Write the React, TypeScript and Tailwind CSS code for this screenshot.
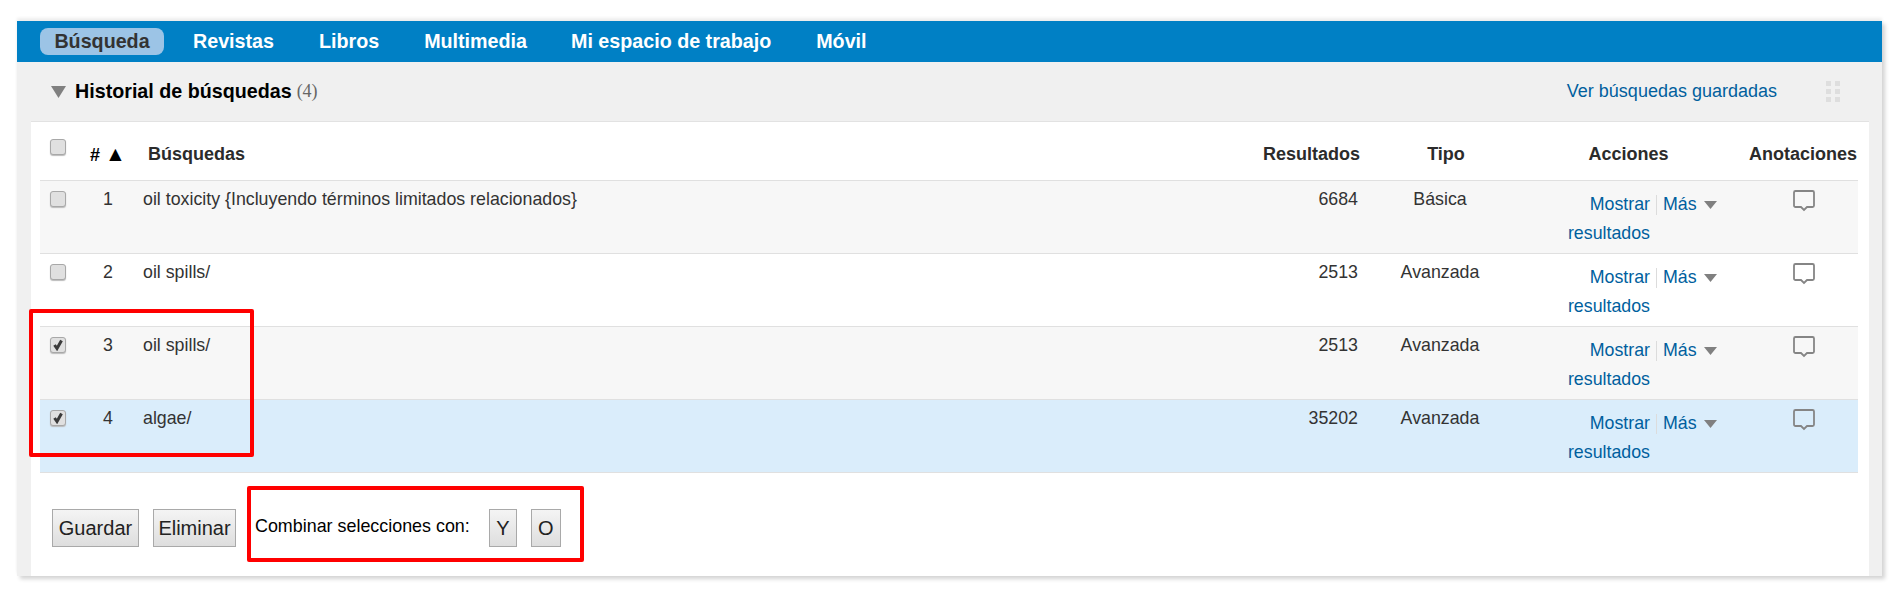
const font = '[font-family:"Liberation_Sans",Arial,sans-serif]';

const rows = [
  { n: 1, q: "oil toxicity {Incluyendo términos limitados relacionados}", r: "6684", t: "Básica", checked: false, bg: "bg-[#f7f7f7]" },
  { n: 2, q: "oil spills/", r: "2513", t: "Avanzada", checked: false, bg: "bg-white" },
  { n: 3, q: "oil spills/", r: "2513", t: "Avanzada", checked: true, bg: "bg-[#f7f7f7]" },
  { n: 4, q: "algae/", r: "35202", t: "Avanzada", checked: true, bg: "bg-[#daedfb]" },
];

const grid = "grid grid-cols-[48px_40px_1fr_140px_130px_245px_108px]";

function Check({ checked }: { checked?: boolean }) {
  return (
    <span className="flex h-[16px] w-[16px] items-center justify-center rounded-[3px] border border-[#a8a8a8] bg-[#e0e0e0] shadow-[0_1px_1px_#bbb]">
      {checked && (
        <svg width="12" height="12" viewBox="0 0 12 12">
          <path d="M2.500 6 L5 9.500 L9.500 1.500" fill="none" stroke="#3a3a3a" strokeWidth="3" />
        </svg>
      )}
    </span>
  );
}

function Comment() {
  return (
    <svg width="24" height="24" viewBox="0 0 24 24" fill="none">
      <path
        d="M3.500 2h17a1.500 1.500 0 0 1 1.500 1.500v13a1.500 1.500 0 0 1-1.500 1.500H15l-3 3-3-3H3.500A1.500 1.500 0 0 1 2 16.500v-13A1.500 1.500 0 0 1 3.500 2z"
        stroke="#858585"
        strokeWidth="1.800"
      />
    </svg>
  );
}

function Tri({ size }: { size: "sm" | "lg" }) {
  return size === "sm" ? (
    <svg width="13" height="8" viewBox="0 0 13 8"><path d="M0 0h13L6.500 8z" fill="#808080" /></svg>
  ) : (
    <svg width="15" height="12" viewBox="0 0 15 12"><path d="M0 0h15L7.500 12z" fill="#808080" /></svg>
  );
}

function Btn({ children, className }: { children: string; className: string }) {
  return (
    <button className={`h-[38px] border border-[#a9a9a9] bg-gradient-to-b from-[#f4f4f4] to-[#dedede] text-[20px] text-[#222] ${className}`}>
      {children}
    </button>
  );
}

export default function App() {
  return (
    <div className={`${font} h-[595px] w-[1899px] overflow-hidden bg-white pl-[17px] pt-[21px] text-[17.8px] text-[#333]`}>
      <div className="relative h-[555px] w-[1865px] bg-[#f0f0f0] shadow-[3px_3px_4px_#d4d4d4,0_-3px_3px_#eeeeee]">
        <nav className="flex h-[41px] items-center bg-[#0080c5] pl-[23px] text-[19.7px] font-bold text-white">
          <a className="flex h-[27px] w-[124px] items-center justify-center rounded-[8px] bg-[#9cc4e6] text-[#333]">Búsqueda</a>
          <a className="ml-[29px]">Revistas</a>
          <a className="ml-[45px]">Libros</a>
          <a className="ml-[45px]">Multimedia</a>
          <a className="ml-[44px]">Mi espacio de trabajo</a>
          <a className="ml-[45px]">Móvil</a>
        </nav>

        <div className="flex h-[59px] items-center pl-[34px] pr-[42px]">
          <Tri size="lg" />
          <span className="ml-[9px] text-[19.7px] font-bold text-black">Historial de búsquedas</span>
          <span className="ml-[5px] text-[18px] text-[#666] [font-family:'Liberation_Serif',serif]">(4)</span>
          <a className="ml-auto text-[18px] text-[#005f9e]">Ver búsquedas guardadas</a>
          <span className="ml-[49px] grid grid-cols-2 gap-x-[4px] gap-y-[3px]">
            {[0, 1, 2, 3, 4, 5].map((i) => (
              <i key={i} className="block h-[5px] w-[5px] bg-[#dedede]" />
            ))}
          </span>
        </div>

        <div className="ml-[14px] mr-[13px] h-[455px] border-t border-[#e2e2e2] bg-white pl-[9px] pr-[11px]">
          <div className={`${grid} h-[58px] text-[18px] font-bold leading-[24px] text-[#2b2b2b]`}>
            <div className="pl-[10px] pt-[17px]"><Check /></div>
            <div className="pt-[20px] text-center text-black">#&nbsp;<span className="text-[21px]">▲</span></div>
            <div className="pl-[20px] pt-[20px]">Búsquedas</div>
            <div className="pr-[15px] pt-[20px] text-right">Resultados</div>
            <div className="pl-[12px] pt-[20px] text-center">Tipo</div>
            <div className="pl-[2px] pt-[20px] text-center">Acciones</div>
            <div className="whitespace-nowrap pt-[20px] -ml-[1px]">Anotaciones</div>
          </div>

          {rows.map((row) => (
            <div key={row.n} className={`${grid} h-[73px] border-t border-[#e0e0e0] ${row.bg} leading-[24px]`}>
              <div className="pl-[10px] pt-[10px]"><Check checked={row.checked} /></div>
              <div className="pt-[6px] text-center">{row.n}</div>
              <div className="pl-[15px] pt-[6px]">{row.q}</div>
              <div className="pr-[17px] pt-[6px] text-right">{row.r}</div>
              <div className="pt-[6px] text-center">{row.t}</div>
              <div className="pl-[63px] pt-[9px] leading-[29px] text-[#005f9e]">
                <div className="flex h-[29px] items-center">
                  <span className="w-[82px] text-right">Mostrar</span>
                  <span className="ml-[6px] mr-[6px] h-[20px] w-px bg-[#dcdcdc]" />
                  <span>Más</span>
                  <span className="ml-[7px]"><Tri size="sm" /></span>
                </div>
                <div className="flex w-[82px] justify-end whitespace-nowrap">resultados</div>
              </div>
              <div className="pl-[42px] pt-[8px]"><Comment /></div>
            </div>
          ))}
          <div className="h-px bg-[#e0e0e0]" />

          <div className="flex items-center pl-[12px] pt-[36px]">
            <Btn className="w-[87px]">Guardar</Btn>
            <Btn className="ml-[14px] w-[83px]">Eliminar</Btn>
            <span className="ml-[19px] pb-[4px] text-[17.9px] text-black">Combinar selecciones con:</span>
            <Btn className="ml-[19px] w-[28px]">Y</Btn>
            <Btn className="ml-[14px] w-[30px]">O</Btn>
          </div>
        </div>

        <div className="absolute left-[12px] top-[288px] h-[148px] w-[225px] rounded-[2px] border-[4px] border-[#ff0000]" />
        <div className="absolute left-[230px] top-[465px] h-[76px] w-[337px] rounded-[2px] border-[4px] border-[#ff0000]" />
      </div>
    </div>
  );
}
